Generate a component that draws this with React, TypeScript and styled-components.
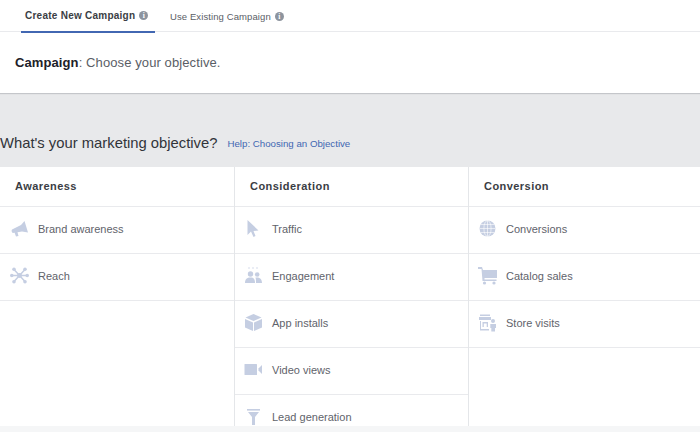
import React from "react";
import styled, { createGlobalStyle } from "styled-components";

const Global = createGlobalStyle`
  html, body { margin: 0; padding: 0; background: #fff; }
  body { font-family: "Liberation Sans", Arial, sans-serif; overflow: hidden; }
`;
const Page = styled.div`width: 700px; height: 432px; overflow: hidden; background: #f5f6f7; display: flex; flex-direction: column;`;
const Tabs = styled.div`height: 31px; background: #fff; border-bottom: 1px solid #e9eaed; display: flex; padding-left: 21px; flex: none; position: relative; z-index: 1;`;
const Tab = styled.div<{ $active?: boolean }>`
  height: 33px; box-sizing: border-box; padding: 0 0 1px ${p => p.$active ? "4px" : "15px"};
  width: ${p => p.$active ? "134px" : "auto"};
  display: flex; align-items: center; gap: 4px; white-space: nowrap;
  font-size: ${p => p.$active ? "10px" : "9.5px"}; letter-spacing: ${p => p.$active ? "0.25px" : "0.1px"}; font-weight: ${p => p.$active ? 700 : 400};
  color: ${p => p.$active ? "#3a3d44" : "#5a5e66"};
  border-bottom: ${p => p.$active ? "2px solid #4267b2" : "none"};
`;
const Info = styled.span`
  width: 9px; height: 9px; border-radius: 50%; background: #8d949e; color: #fff; font-size: 7.5px; font-weight: 700; letter-spacing: 0;
  display: inline-flex; align-items: center; justify-content: center; font-family: "Liberation Serif", serif; flex: none;
`;
const Header = styled.div`height: 61px; background: #fff; box-shadow: 0 1px 1px #c4c6ca; display: flex; align-items: center; padding-left: 15px; font-size: 13px; letter-spacing: 0.1px; color: #5a5e66; flex: none; padding-bottom: 1px; box-sizing: border-box; position: relative;`;
const Strong = styled.span`color: #1d2129; font-weight: 700;`;
const Band = styled.div`height: 74px; background: #e8e9eb; display: flex; align-items: flex-end; padding-bottom: 15px; box-sizing: border-box; flex: none;`;
const Question = styled.span`font-size: 14.8px; color: #31343a; line-height: 18px;`;
const Help = styled.span`font-size: 9.7px; color: #4267b2; margin-left: 10px; line-height: 16px;`;
const Grid = styled.div`height: 259px; background: #fff; display: grid; grid-template-columns: 235px 234px 231px; flex: none; overflow: hidden;`;
const Column = styled.div<{ $last?: boolean }>`
  display: flex; flex-direction: column; box-sizing: border-box; height: 259px; overflow: hidden;
  border-right: ${p => p.$last ? "none" : "1px solid #e4e6e9"};
`;
const ColumnTitle = styled.div`height: 40px; box-sizing: border-box; border-bottom: 1px solid #e9eaed; display: flex; align-items: center; padding: 0 0 1px 15px; font-size: 11px; letter-spacing: 0.45px; font-weight: 700; color: #3a3d44; flex: none;`;
const Row = styled.div<{ $first?: boolean }>`height: 47px; box-sizing: border-box; border-bottom: 1px solid #e9eaed; display: flex; align-items: center; flex: none; padding: 0 0 3px ${p => p.$first ? "10px" : "9px"}; gap: 9px;`;
const IconBox = styled.div`width: 19px; height: 19px; flex: none; color: #c5cee2; display: flex; align-items: center; justify-content: center;`;
const Label = styled.span`font-size: 11px; color: #5f636b;`;

const Svg: React.FC<{ children: React.ReactNode }> = ({ children }) => (
  <svg width="19" height="19" viewBox="0 0 19 19" fill="currentColor">{children}</svg>
);

const icons: Record<string, React.ReactNode> = {
  brand: <Svg><path d="M2 10.5 L11 6 L14.5 2 L18 13.5 L12 12.5 L7.5 13.2 L8.5 17 L6 17.5 L4.6 13.8 L2.8 14 C1.5 13.5 1.3 11.3 2 10.5 Z" /></Svg>,
  reach: <Svg><path d="M1.5 9.5H17.5M4 3.5L15 15.5M15 3.5L4 15.5" stroke="currentColor" strokeWidth="1.5" /><circle cx="9.5" cy="9.5" r="2.4" /><circle cx="1.8" cy="9.5" r="1.8" /><circle cx="17.2" cy="9.5" r="1.8" /><circle cx="4" cy="3.2" r="1.8" /><circle cx="15" cy="3.2" r="1.8" /><circle cx="4" cy="15.8" r="1.8" /><circle cx="15" cy="15.8" r="1.8" /></Svg>,
  traffic: <Svg><path d="M3.5 1 L3.5 16 L7 12.5 L9.5 18 L11.5 17 L9.5 12 L14.5 11.5 Z" /></Svg>,
  engagement: <Svg><circle cx="6.5" cy="8" r="2.7" /><circle cx="13.2" cy="8.5" r="2.3" /><path d="M1 17 C1 13 3 11.5 6.5 11.5 C10 11.5 11 13.5 11 17 Z" /><path d="M11.5 11.6 C15 11 18 12.5 18 17 L12 17 C12 15 12 13 11.5 11.6 Z" /><circle cx="5" cy="2" r=".7" /><circle cx="9" cy="2" r=".7" /><circle cx="13" cy="2" r=".7" /></Svg>,
  app: <Svg><path d="M9.5 1 L17.5 4.5 L9.5 8 L1.5 4.5 Z" /><path d="M1 6 L9 9.5 L9 18 L1 14.5 Z" /><path d="M18 6 L10 9.5 L10 18 L18 14.5 Z" /></Svg>,
  video: <Svg><rect x="0.5" y="4" width="12.5" height="11" rx=".5" /><path d="M14.5 8.5 L18 5 L18 14 L14.5 10.5 Z" /></Svg>,
  lead: <Svg><path d="M3 2 L16 2 L16 3.6 L3 3.6 Z" /><path d="M4 5 L15 5 L11 10 L11 18 L8 18 L8 10 Z" /></Svg>,
  conv: <Svg><circle cx="9.5" cy="9.5" r="8" /><g stroke="#fff" strokeWidth=".6" fill="none"><ellipse cx="9.5" cy="9.5" rx="3.6" ry="8" /><path d="M9.5 1.5V17.5M1.5 9.5H17.5M2.6 5.5H16.4M2.6 13.5H16.4" /></g></Svg>,
  catalog: <Svg><path d="M0 1 L4 1 L5 4 L19 4 L19 12 L6.5 12 L6.5 13.5 L18.5 13.5 L18.5 15 L4.5 15 L3.5 3 L0 3 Z" /><circle cx="6.5" cy="17" r="1.6" /><circle cx="16" cy="17" r="1.6" /></Svg>,
  store: <Svg><path d="M2 1.5H12V3H2ZM1 4H13V7H1Z" /><path d="M2 8H3V16H11V17.5H2Z" /><path d="M4.5 9H10V14H8.7V10.5H5.8V14H4.5Z" /><circle cx="15" cy="8" r="2" /><path d="M12.3 11H18V15H17V18.5H13.3V15H12.3Z" /></Svg>,
};

const columns = [
  { title: "Awareness", rows: [["brand", "Brand awareness"], ["reach", "Reach"]] },
  { title: "Consideration", rows: [["traffic", "Traffic"], ["engagement", "Engagement"], ["app", "App installs"], ["video", "Video views"], ["lead", "Lead generation"]] },
  { title: "Conversion", rows: [["conv", "Conversions"], ["catalog", "Catalog sales"], ["store", "Store visits"]] },
];

export default function App() {
  return (
    <Page>
      <Global />
      <Tabs>
        <Tab $active>Create New Campaign <Info>i</Info></Tab>
        <Tab>Use Existing Campaign <Info>i</Info></Tab>
      </Tabs>
      <Header><span><Strong>Campaign</Strong>: Choose your objective.</span></Header>
      <Band><Question>What's your marketing objective?</Question><Help>Help: Choosing an Objective</Help></Band>
      <Grid>
        {columns.map((c, i) => (
          <Column key={c.title} $last={i === 2}>
            <ColumnTitle>{c.title}</ColumnTitle>
            {c.rows.map(([k, l]) => (
              <Row key={k} $first={i === 0}><IconBox>{icons[k]}</IconBox><Label>{l}</Label></Row>
            ))}
          </Column>
        ))}
      </Grid>
    </Page>
  );
}
